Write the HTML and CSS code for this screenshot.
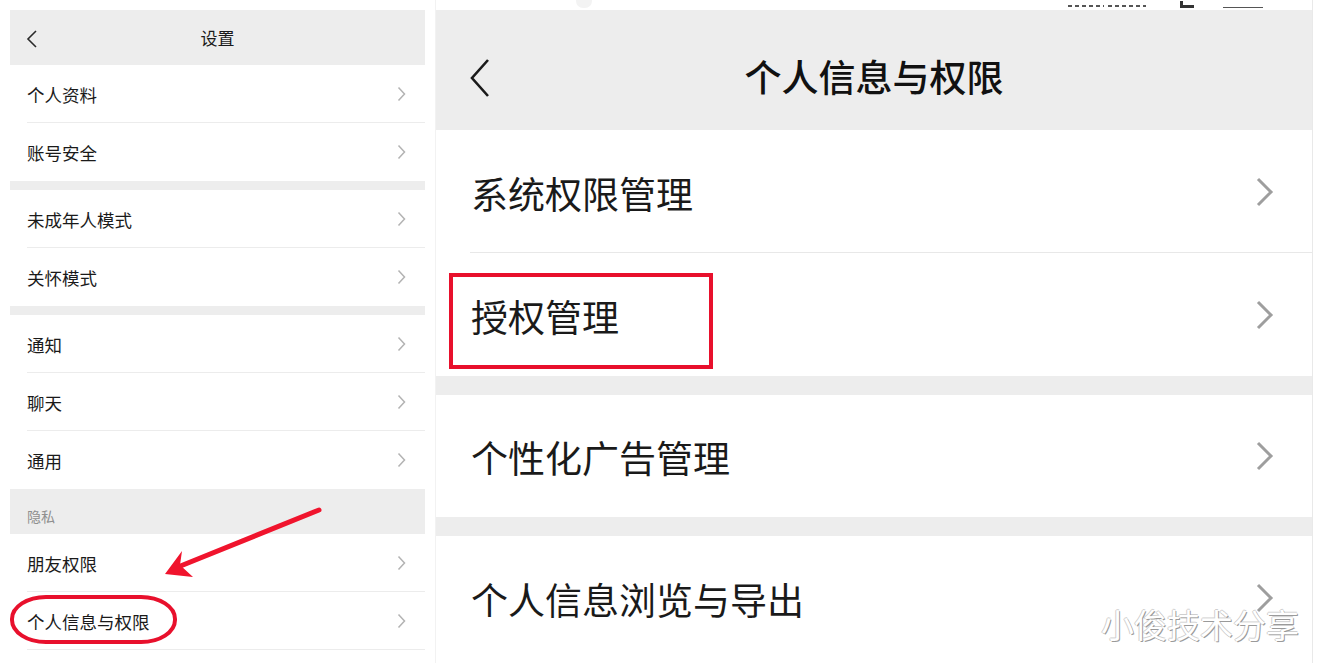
FILE: index.html
```html
<!DOCTYPE html>
<html lang="zh">
<head>
<meta charset="utf-8">
<title>设置 - 个人信息与权限</title>
<link rel="stylesheet" href="styles.css">
</head>
<body>
<div class="page">
  <section class="left">
    <header class="lhead">
      <svg class="lback" width="12" height="20" viewBox="0 0 12 20"><path d="M10 2 L2 10 L10 18" fill="none" stroke="#2a2a2a" stroke-width="1.6"/></svg>
      <span class="ltitle">设置</span>
    </header>
    <div class="lgroup">
      <div class="lrow"><span>个人资料</span><svg class="lchev" width="9" height="16" viewBox="0 0 9 16"><path d="M1.5 1.5 L7.5 8 L1.5 14.5" fill="none" stroke="#b3b3b3" stroke-width="1.5"/></svg></div>
      <div class="lrow"><span>账号安全</span><svg class="lchev" width="9" height="16" viewBox="0 0 9 16"><path d="M1.5 1.5 L7.5 8 L1.5 14.5" fill="none" stroke="#b3b3b3" stroke-width="1.5"/></svg></div>
    </div>
    <div class="lgap"></div>
    <div class="lgroup">
      <div class="lrow"><span>未成年人模式</span><svg class="lchev" width="9" height="16" viewBox="0 0 9 16"><path d="M1.5 1.5 L7.5 8 L1.5 14.5" fill="none" stroke="#b3b3b3" stroke-width="1.5"/></svg></div>
      <div class="lrow"><span>关怀模式</span><svg class="lchev" width="9" height="16" viewBox="0 0 9 16"><path d="M1.5 1.5 L7.5 8 L1.5 14.5" fill="none" stroke="#b3b3b3" stroke-width="1.5"/></svg></div>
    </div>
    <div class="lgap"></div>
    <div class="lgroup">
      <div class="lrow"><span>通知</span><svg class="lchev" width="9" height="16" viewBox="0 0 9 16"><path d="M1.5 1.5 L7.5 8 L1.5 14.5" fill="none" stroke="#b3b3b3" stroke-width="1.5"/></svg></div>
      <div class="lrow"><span>聊天</span><svg class="lchev" width="9" height="16" viewBox="0 0 9 16"><path d="M1.5 1.5 L7.5 8 L1.5 14.5" fill="none" stroke="#b3b3b3" stroke-width="1.5"/></svg></div>
      <div class="lrow"><span>通用</span><svg class="lchev" width="9" height="16" viewBox="0 0 9 16"><path d="M1.5 1.5 L7.5 8 L1.5 14.5" fill="none" stroke="#b3b3b3" stroke-width="1.5"/></svg></div>
    </div>
    <div class="llabel">隐私</div>
    <div class="lgroup">
      <div class="lrow"><span>朋友权限</span><svg class="lchev" width="9" height="16" viewBox="0 0 9 16"><path d="M1.5 1.5 L7.5 8 L1.5 14.5" fill="none" stroke="#b3b3b3" stroke-width="1.5"/></svg></div>
      <div class="lrow"><span>个人信息与权限</span><svg class="lchev" width="9" height="16" viewBox="0 0 9 16"><path d="M1.5 1.5 L7.5 8 L1.5 14.5" fill="none" stroke="#b3b3b3" stroke-width="1.5"/></svg></div>
      <div class="lrow"></div>
    </div>
  </section>

  <section class="right">
    <div class="status">
      <span class="st-blob"></span>
      <span class="st-dots"></span>
      <span class="st-dots second"></span>
      <span class="st-sig"></span>
      <span class="st-bat"></span>
    </div>
    <header class="rhead">
      <svg class="rback" width="22" height="40" viewBox="0 0 22 40"><path d="M19 2 L3 20 L19 38" fill="none" stroke="#1a1a1a" stroke-width="2.6"/></svg>
      <span class="rtitle">个人信息与权限</span>
    </header>
    <div class="rgroup">
      <div class="rrow"><span>系统权限管理</span><svg class="rchev" width="18" height="30" viewBox="0 0 18 30"><path d="M2 2 L15 15 L2 28" fill="none" stroke="#9e9e9e" stroke-width="3"/></svg></div>
      <div class="rrow"><span>授权管理</span><svg class="rchev" width="18" height="30" viewBox="0 0 18 30"><path d="M2 2 L15 15 L2 28" fill="none" stroke="#9e9e9e" stroke-width="3"/></svg></div>
    </div>
    <div class="rgap"></div>
    <div class="rgroup">
      <div class="rrow short"><span>个性化广告管理</span><svg class="rchev" width="18" height="30" viewBox="0 0 18 30"><path d="M2 2 L15 15 L2 28" fill="none" stroke="#9e9e9e" stroke-width="3"/></svg></div>
    </div>
    <div class="rgap"></div>
    <div class="rgroup">
      <div class="rrow"><span>个人信息浏览与导出</span><svg class="rchev" width="18" height="30" viewBox="0 0 18 30"><path d="M2 2 L15 15 L2 28" fill="none" stroke="#9e9e9e" stroke-width="3"/></svg></div>
    </div>
  </section>

  <svg class="annot" width="1323" height="663" viewBox="0 0 1323 663">
    <path d="M319 510 L178 567" stroke="#f0142d" stroke-width="5" stroke-linecap="round" fill="none"/>
    <path d="M165 574 L182 551 L180 565 L193 577 Z" fill="#f0142d"/>
    <rect x="12" y="597" width="163" height="45" rx="34" ry="22" fill="none" stroke="#e8102c" stroke-width="4"/>
  </svg>
  <div class="redbox"></div>
  <div class="watermark">小俊技术分享</div>
</div>
</body>
</html>
```

FILE: styles.css
```css
* { box-sizing: border-box; }
html, body { margin: 0; padding: 0; background: #ffffff; }
body {
  font-family: "Noto Sans CJK SC", "Noto Sans", "Liberation Sans", sans-serif;
  color: #1a1a1a;
  width: 1323px;
  height: 663px;
  overflow: hidden;
}
.page {
  position: relative;
  display: flex;
  gap: 10px;
  padding-left: 10px;
  width: 1323px;
  height: 663px;
  overflow: hidden;
}

/* ---------- left panel ---------- */
.left {
  width: 415px;
  flex: none;
  padding-top: 10px;
  display: flex;
  flex-direction: column;
}
.left > *, .right > * { flex: none; }
.lhead {
  height: 55px;
  background: #ededed;
  display: flex;
  align-items: center;
  justify-content: center;
  position: relative;
}
.lback { position: absolute; left: 16px; top: 19px; }
.ltitle { font-size: 17px; color: #1a1a1a; }
.lgroup { background: #fff; display: flex; flex-direction: column; }
.lrow {
  height: 58px;
  flex: none;
  display: flex;
  align-items: center;
  justify-content: space-between;
  padding: 0 19px 0 17px;
  font-size: 17.5px;
  color: #1a1a1a;
  position: relative;
}
.lrow::after {
  content: "";
  position: absolute;
  left: 17px;
  right: 0;
  bottom: 0;
  height: 1px;
  background: #ececec;
}
.lrow:last-child::after { display: none; }
.lchev { flex: none; }
.lgap { height: 9px; background: #ededed; }
.llabel {
  height: 45px;
  background: #ededed;
  display: flex;
  align-items: center;
  padding: 8px 17px 0;
  font-size: 14px;
  color: #8f8f8f;
}

/* ---------- right panel ---------- */
.right {
  width: 878px;
  flex: none;
  display: flex;
  flex-direction: column;
  border-left: 1px solid #f2f2f2;
  border-right: 1px solid #e9e9e9;
}
.status {
  height: 10px;
  position: relative;
  background: #fff;
  overflow: hidden;
}
.st-blob {
  position: absolute; left: 140px; top: -6px;
  width: 16px; height: 14px; border-radius: 7px;
  background: #f3f3f3;
}
.st-dots {
  position: absolute; left: 632px; top: 5px; width: 36px; height: 2px;
  background: repeating-linear-gradient(90deg, #555 0 4px, transparent 4px 7px);
}
.st-dots.second { left: 672px; width: 38px; }
.st-sig {
  position: absolute; left: 744px; top: 1px; width: 14px; height: 7px;
  border-bottom: 3px solid #333;
  border-left: 3px solid #333;
}
.st-bat {
  position: absolute; left: 787px; top: 7px; width: 40px; height: 1px;
  background: #555;
}
.rhead {
  height: 120px;
  background: #ededed;
  display: flex;
  align-items: center;
  justify-content: center;
  position: relative;
}
.rback { position: absolute; left: 33px; top: 48px; }
.rtitle { font-size: 37px; font-weight: 500; color: #111; padding-top: 12px; }
.rgroup { background: #fff; display: flex; flex-direction: column; }
.rrow {
  height: 123px;
  flex: none;
  display: flex;
  align-items: center;
  justify-content: space-between;
  padding: 0 38px 0 35px;
  font-size: 37px;
  color: #1a1a1a;
  position: relative;
}
.rrow.short { height: 122px; }
.rrow span { padding-top: 2px; }
.rrow::after {
  content: "";
  position: absolute;
  left: 34px;
  right: 0;
  bottom: 0;
  height: 1px;
  background: #e8e8e8;
}
.rrow:last-child::after { display: none; }
.rchev { flex: none; }
.rgap { height: 19px; background: #ededed; }

/* ---------- annotations ---------- */
.annot { position: absolute; left: 0; top: 0; pointer-events: none; }
.redbox {
  position: absolute;
  left: 449px; top: 273px;
  width: 264px; height: 96px;
  border: 4px solid #e8102c;
}
.watermark {
  position: absolute;
  left: 1101px; top: 600px;
  font-size: 33px;
  color: #ffffff;
  text-shadow: 1px 1px 0 #9a9a9a, -1px 0 0 #cfcfcf, 0 -1px 0 #cfcfcf;
}
```
